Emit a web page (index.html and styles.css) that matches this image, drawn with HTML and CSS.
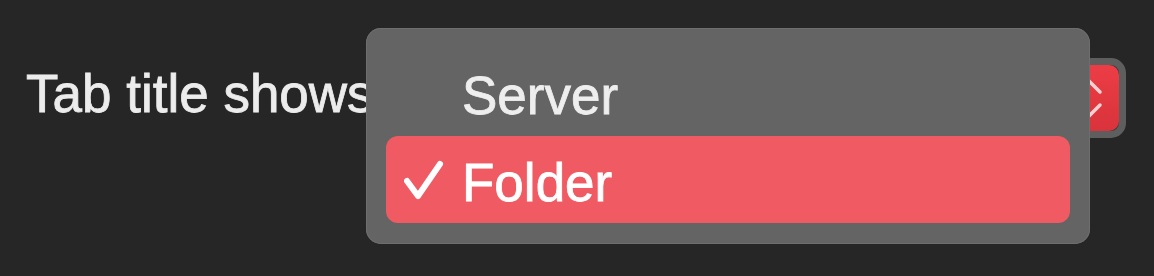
FILE: index.html
```html
<!DOCTYPE html>
<html>
<head>
<meta charset="utf-8">
<link rel="stylesheet" href="styles.css">
</head>
<body>
<div class="row">
  <span class="label">Tab title shows</span>
  <div class="popup">
    <span class="stepper">
      <svg width="60" height="67" viewBox="0 0 60 67">
        <polyline points="15,27 28,14 41,27" fill="none" stroke="#f6d0d2" stroke-width="3.5" stroke-linecap="round" stroke-linejoin="round"/>
        <polyline points="15,40 28,53 41,40" fill="none" stroke="#f6d0d2" stroke-width="3.5" stroke-linecap="round" stroke-linejoin="round"/>
      </svg>
    </span>
  </div>
</div>
<div class="menu">
  <div class="item">
    <span class="check"></span>
    <span class="item-text">Server</span>
  </div>
  <div class="item selected">
    <span class="check">
      <svg width="40" height="40" viewBox="0 0 40 40">
        <polyline points="3,21 14,36 36,4" fill="none" stroke="#ffffff" stroke-width="6" stroke-linecap="round" stroke-linejoin="round"/>
      </svg>
    </span>
    <span class="item-text">Folder</span>
  </div>
</div>
</body>
</html>
```

FILE: styles.css
```css
html, body {
  margin: 0;
  padding: 0;
  background: #262626;
  width: 1154px;
  height: 276px;
  overflow: hidden;
  font-family: "Liberation Sans", Arial, sans-serif;
}

.row {
  display: flex;
  align-items: center;
  justify-content: space-between;
  height: 196px;
  padding: 0 28px 0 26px;
}

.label {
  color: #ececec;
  font-size: 53px;
  line-height: 1;
  margin-top: -10px;
  -webkit-text-stroke: 0.8px #ececec;
}

.popup {
  width: 720px;
  height: 66px;
  border: 7px solid #5e5e5e;
  border-radius: 15px;
  background: #3c3c3c;
  display: flex;
  align-items: center;
  justify-content: flex-end;
  box-sizing: content-box;
}

.stepper {
  width: 60px;
  height: 66px;
  border-radius: 10px;
  background: linear-gradient(#ec3d45, #d9333b);
  display: flex;
}

.menu {
  position: absolute;
  left: 366px;
  top: 28px;
  width: 724px;
  height: 216px;
  box-sizing: border-box;
  padding: 21px 20px;
  background: #646464;
  border-radius: 15px;
  box-shadow: inset 0 0 0 1px #6e6e6e;
  display: flex;
  flex-direction: column;
}

.item {
  height: 87px;
  display: flex;
  align-items: center;
  border-radius: 12px;
  padding-left: 18px;
}

.item.selected {
  background: #f05b63;
}

.check {
  width: 58px;
  height: 40px;
  display: flex;
  align-items: center;
}

.item-text {
  color: #eeeeee;
  font-size: 53px;
  line-height: 1;
  margin-top: 6px;
  -webkit-text-stroke: 0.8px #eeeeee;
}

.item.selected .item-text {
  color: #ffffff;
  -webkit-text-stroke: 0.8px #ffffff;
}
```
